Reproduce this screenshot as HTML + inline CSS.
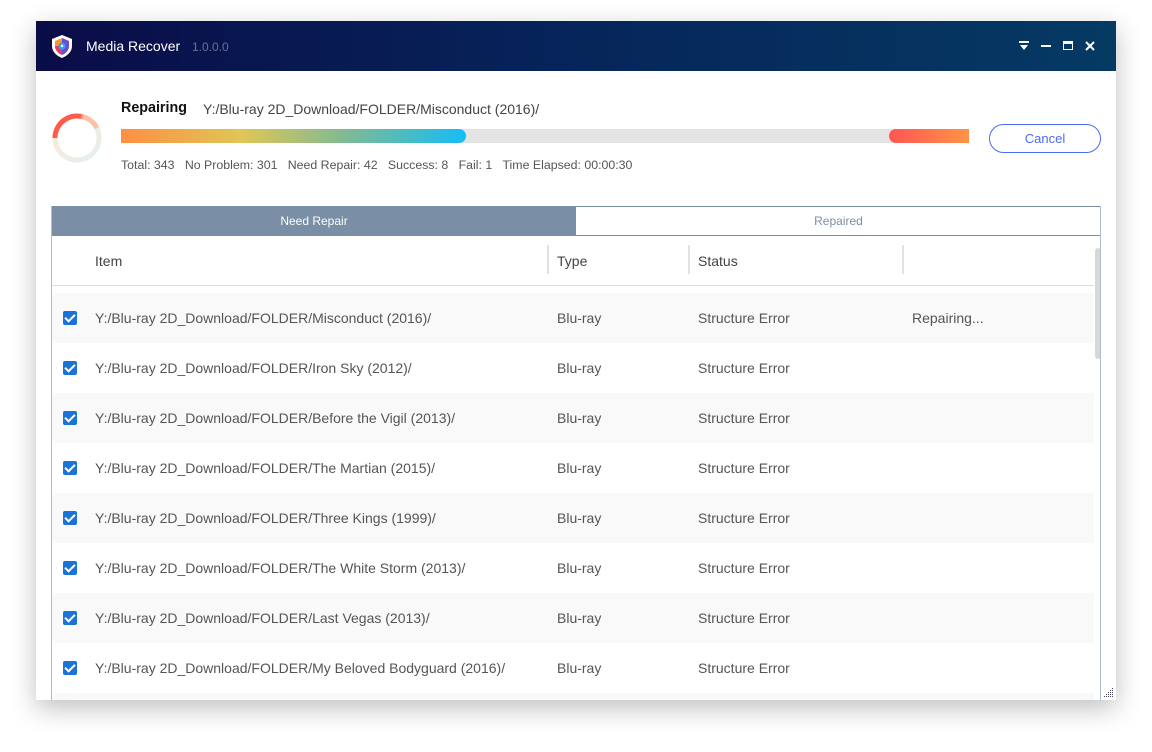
<!DOCTYPE html>
<html><head><style>
*{margin:0;padding:0;box-sizing:border-box}
body{width:1152px;height:752px;background:#fff;font-family:"Liberation Sans",Arial,sans-serif;position:relative;overflow:hidden}
.win{position:absolute;left:36px;top:21px;width:1080px;height:679px;background:#fff;box-shadow:0 8px 24px rgba(0,0,0,.25);overflow:hidden}
.tb{position:absolute;left:0;top:0;width:1080px;height:50px;background:linear-gradient(90deg,#0a0c48,#06255a 50%,#053a63)}
.tb .t{position:absolute;left:50px;top:17px;color:#fff;font-size:14px}
.tb .v{position:absolute;left:156px;top:19px;color:#6a6f8e;font-size:12px}
.abs{position:absolute}
.stat{position:absolute;left:85px;top:137px;font-size:12.35px;color:#555}
.tbl{position:absolute;left:15px;top:185px;width:1050px;height:500px;border:1px solid #a9bdd1;border-top:none;overflow:hidden}
.row{position:absolute;left:0;width:1042px;height:50px;font-size:14px;color:#555}
.row span{position:absolute;top:17px}
.cb{position:absolute;left:11px;top:18px;width:14px;height:14px;background:#1a73d9;border-radius:2px}
.cb::after{content:"";position:absolute;left:4px;top:1px;width:4px;height:8px;border:solid #fff;border-width:0 2px 2px 0;transform:rotate(45deg)}
</style></head><body>
<div class="win">
 <div class="tb">
  <svg class="abs" style="left:14px;top:13px" width="24" height="25" viewBox="0 0 24 25"><path d="M12 1 L22 5 V12 C22 18 17 22 12 24 C7 22 2 18 2 12 V5Z" fill="#fff"/><path d="M12 4 L19 7 V12 C19 16.5 15.5 19.5 12 21 C8.5 19.5 5 16.5 5 12 V7Z" fill="#f39a2b"/><path d="M12 4 L19 7 V12 C19 16.5 15.5 19.5 12 21Z" fill="#6a4cd8"/><path d="M5 12 C5 16.5 8.5 19.5 12 21 V12Z" fill="#e23a6a"/><circle cx="12" cy="12" r="3.5" fill="#3aa0e8"/><circle cx="12" cy="12" r="1.2" fill="#fff"/></svg>
  <div class="t">Media Recover</div><div class="v">1.0.0.0</div>
  <svg class="abs" style="left:983px;top:20px" width="10" height="10"><rect x="0" y="0" width="10" height="2" fill="#fff"/><path d="M1 4 H9 L5 9Z" fill="#fff"/></svg>
  <div class="abs" style="left:1005px;top:24px;width:10px;height:2px;background:#fff"></div>
  <div class="abs" style="left:1027px;top:20px;width:10px;height:9px;border:1.5px solid #fff;border-top-width:3px"></div>
  <svg class="abs" style="left:1049px;top:20px" width="10" height="10"><path d="M1 1L9 9M9 1L1 9" stroke="#fff" stroke-width="2"/></svg>
 </div>
 <svg class="abs" style="left:15px;top:91px" width="52" height="52" viewBox="0 0 52 52"><defs><linearGradient id="g" x1="0" y1="0" x2="1" y2="1"><stop offset="0" stop-color="#fde8d0"/><stop offset="1" stop-color="#e3f0f2"/></linearGradient></defs><circle cx="26" cy="26" r="22" fill="none" stroke="url(#g)" stroke-width="5"/><path d="M4 26 A22 22 0 0 1 32 4.8" fill="none" stroke="#ff5a4a" stroke-width="5"/><path d="M30 4.4 A22 22 0 0 1 46 16" fill="none" stroke="#ffb08a" stroke-width="5" opacity=".7"/></svg>
 <div class="abs" style="left:85px;top:79px;font-size:14.3px;font-weight:bold;color:#111">Repairing</div>
 <div class="abs" style="left:167px;top:80px;font-size:14px;color:#444">Y:/Blu-ray 2D_Download/FOLDER/Misconduct (2016)/</div>
 <div class="abs" style="left:85px;top:108px;width:848px;height:14px;background:#e4e4e4"></div>
 <div class="abs" style="left:85px;top:108px;width:345px;height:14px;background:linear-gradient(90deg,#fd8f44,#e0c656 35%,#7fba93 65%,#16bdf6);border-radius:0 7px 7px 0"></div>
 <div class="abs" style="left:853px;top:108px;width:80px;height:14px;background:linear-gradient(90deg,#ff5555,#ff9446);border-radius:7px 0 0 7px"></div>
 <div class="abs" style="left:953px;top:103px;width:112px;height:29px;border:1px solid #4a6cf0;border-radius:15px;color:#4a6cf0;font-size:13px;text-align:center;line-height:27px">Cancel</div>
 <div class="stat">Total: 343&nbsp;&nbsp;&nbsp;No Problem: 301&nbsp;&nbsp;&nbsp;Need Repair: 42&nbsp;&nbsp;&nbsp;Success: 8&nbsp;&nbsp;&nbsp;Fail: 1&nbsp;&nbsp;&nbsp;Time Elapsed: 00:00:30</div>
 <div class="tbl">
  <div class="abs" style="left:0;top:0;width:524px;height:30px;background:#7a8fa5;color:#fff;font-size:12px;text-align:center;line-height:30px">Need Repair</div>
  <div class="abs" style="left:524px;top:0;width:526px;height:30px;border:1px solid #7a8fa5;border-left:none;color:#7a8fa5;font-size:12px;text-align:center;line-height:28px">Repaired</div>
  <div class="abs" style="left:-1px;top:30px;width:1043px;height:50px;border-bottom:1px solid #ddd;font-size:14px;color:#444">
   <span class="abs" style="left:44px;top:17px">Item</span>
   <div class="abs" style="left:496px;top:9px;width:2px;height:29px;background:#e2e2e2"></div>
   <span class="abs" style="left:506px;top:17px">Type</span>
   <div class="abs" style="left:637px;top:9px;width:2px;height:29px;background:#e2e2e2"></div>
   <span class="abs" style="left:647px;top:17px">Status</span>
   <div class="abs" style="left:851px;top:9px;width:2px;height:29px;background:#e2e2e2"></div>
  </div>
  <div class="abs" style="left:1043px;top:42px;width:6px;height:111px;background:#d8d8d8;border-radius:3px"></div>
  <div class="row" style="top:87px;background:#f9f9f9"><div class="cb"></div><span style="left:43px">Y:/Blu-ray 2D_Download/FOLDER/Misconduct (2016)/</span><span style="left:505px">Blu-ray</span><span style="left:646px">Structure Error</span><span style="left:860px">Repairing...</span></div>
  <div class="row" style="top:137px"><div class="cb"></div><span style="left:43px">Y:/Blu-ray 2D_Download/FOLDER/Iron Sky (2012)/</span><span style="left:505px">Blu-ray</span><span style="left:646px">Structure Error</span></div>
  <div class="row" style="top:187px;background:#f9f9f9"><div class="cb"></div><span style="left:43px">Y:/Blu-ray 2D_Download/FOLDER/Before the Vigil (2013)/</span><span style="left:505px">Blu-ray</span><span style="left:646px">Structure Error</span></div>
  <div class="row" style="top:237px"><div class="cb"></div><span style="left:43px">Y:/Blu-ray 2D_Download/FOLDER/The Martian (2015)/</span><span style="left:505px">Blu-ray</span><span style="left:646px">Structure Error</span></div>
  <div class="row" style="top:287px;background:#f9f9f9"><div class="cb"></div><span style="left:43px">Y:/Blu-ray 2D_Download/FOLDER/Three Kings (1999)/</span><span style="left:505px">Blu-ray</span><span style="left:646px">Structure Error</span></div>
  <div class="row" style="top:337px"><div class="cb"></div><span style="left:43px">Y:/Blu-ray 2D_Download/FOLDER/The White Storm (2013)/</span><span style="left:505px">Blu-ray</span><span style="left:646px">Structure Error</span></div>
  <div class="row" style="top:387px;background:#f9f9f9"><div class="cb"></div><span style="left:43px">Y:/Blu-ray 2D_Download/FOLDER/Last Vegas (2013)/</span><span style="left:505px">Blu-ray</span><span style="left:646px">Structure Error</span></div>
  <div class="row" style="top:437px"><div class="cb"></div><span style="left:43px">Y:/Blu-ray 2D_Download/FOLDER/My Beloved Bodyguard (2016)/</span><span style="left:505px">Blu-ray</span><span style="left:646px">Structure Error</span></div>
  <div class="row" style="top:487px;background:#f9f9f9"></div>
 </div>
 <svg class="abs" style="left:1068px;top:667px" width="10" height="10"><g fill="#445"><rect x="8" y="0" width="1" height="1"/><rect x="6" y="2" width="1" height="1"/><rect x="8" y="2" width="1" height="1"/><rect x="4" y="4" width="1" height="1"/><rect x="6" y="4" width="1" height="1"/><rect x="8" y="4" width="1" height="1"/><rect x="2" y="6" width="1" height="1"/><rect x="4" y="6" width="1" height="1"/><rect x="6" y="6" width="1" height="1"/><rect x="8" y="6" width="1" height="1"/><rect x="0" y="8" width="1" height="1"/><rect x="2" y="8" width="1" height="1"/><rect x="4" y="8" width="1" height="1"/><rect x="6" y="8" width="1" height="1"/><rect x="8" y="8" width="1" height="1"/></g></svg>
</div>
</body></html>
